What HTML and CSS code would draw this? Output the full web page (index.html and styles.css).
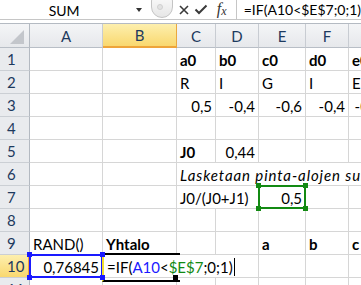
FILE: index.html
```html
<!DOCTYPE html>
<html>
<head>
<meta charset="utf-8">
<link rel="stylesheet" href="styles.css">
</head>
<body>
<div class="fbar">
  <div class="namebox">SUM</div>
  <div class="dd"><span class="tri"></span></div>
  <div class="split"><span class="dot"></span></div>
  <div class="btns">
    <svg class="ic-x" width="10" height="10" viewBox="0 0 10 10"><path d="M1 1L9 9M9 1L1 9" stroke="#3a3a3a" stroke-width="1.6" fill="none"/></svg>
    <svg class="ic-ok" width="14" height="11" viewBox="0 0 14 11"><path d="M1.5 5.5L5 9L12.5 1.5" fill="none" stroke="#3a3a3a" stroke-width="2"/></svg>
    <span class="fx"><span class="f">f</span><span class="x">x</span></span>
  </div>
  <div class="formula">=IF(A10&lt;$E$7;0;1)</div>
</div>
<div class="gap"></div>
<div class="sheet">
  <div class="corner"><span class="tri2"></span></div>
  <div class="ch">A</div><div class="ch sel">B</div><div class="ch">C</div><div class="ch">D</div><div class="ch">E</div><div class="ch">F</div><div class="ch">G</div>

  <div class="rh">1</div><div class="c"></div><div class="c"></div><div class="c b">a0</div><div class="c b">b0</div><div class="c b">c0</div><div class="c b">d0</div><div class="c b">e0</div>

  <div class="rh">2</div><div class="c"></div><div class="c"></div><div class="c">R</div><div class="c">I</div><div class="c">G</div><div class="c">I</div><div class="c">E</div>

  <div class="rh">3</div><div class="c"></div><div class="c"></div><div class="c n">0,5</div><div class="c n">-0,4</div><div class="c n">-0,6</div><div class="c n">-0,4</div><div class="c n">-0,4</div>

  <div class="rh">4</div><div class="c"></div><div class="c"></div><div class="c"></div><div class="c"></div><div class="c"></div><div class="c"></div><div class="c"></div>

  <div class="rh">5</div><div class="c"></div><div class="c"></div><div class="c b">J0</div><div class="c n">0,44</div><div class="c"></div><div class="c"></div><div class="c"></div>

  <div class="rh">6</div><div class="c"></div><div class="c"></div><div class="c i span-rest">Lasketaan pinta-alojen summa</div>

  <div class="rh">7</div><div class="c"></div><div class="c"></div><div class="c span2">J0/(J0+J1)</div><div class="c n ref green">0,5<span class="h tl"></span><span class="h tr"></span><span class="h bl"></span><span class="h br"></span></div><div class="c"></div><div class="c"></div>

  <div class="rh">8</div><div class="c"></div><div class="c"></div><div class="c"></div><div class="c"></div><div class="c"></div><div class="c"></div><div class="c"></div>

  <div class="rh">9</div><div class="c">RAND()</div><div class="c b">Yhtalo</div><div class="c"></div><div class="c"></div><div class="c b">a</div><div class="c b">b</div><div class="c b">c</div>

  <div class="rh sel">10</div><div class="c n ref blue">0,76845<span class="h tl"></span><span class="h tr"></span><span class="h bl"></span><span class="h br"></span></div><div class="c edit span3">=IF(<span class="rb">A10</span>&lt;<span class="rg">$E$7</span>;0;1)<span class="caret"></span></div><div class="c"></div><div class="c"></div><div class="c"></div>

  <div class="rh">11</div><div class="c"></div><div class="c"></div><div class="c"></div><div class="c"></div><div class="c"></div><div class="c"></div><div class="c"></div>
</div>
</body>
</html>
```

FILE: styles.css
```css
* { box-sizing: border-box; margin: 0; padding: 0; }
html, body { width: 361px; height: 285px; overflow: hidden; background: #fff; }
body { font-family: Lato, "Liberation Sans", sans-serif; font-size: 15px; color: #000; }

/* formula bar */
.fbar { display: flex; height: 20px; border-bottom: 1px solid #c6c6c6; overflow: hidden; }
.namebox { width: 132px; display: flex; align-items: center; justify-content: center; font-size: 14px; padding-top: 1px; }
.dd { width: 21px; display: flex; align-items: center; justify-content: center; }
.tri { width: 0; height: 0; border-left: 3.5px solid transparent; border-right: 3.5px solid transparent; border-top: 4px solid #333; }
.split { width: 22px; height: 28px; margin-top: -10px; margin-left: 2px; border: 1px solid #c4c4c4; border-radius: 11px; background: linear-gradient(#ffffff, #e6e6e6); padding: 13px 0 0 5px; flex: none; }
.dot { display: block; width: 6px; height: 6px; border-radius: 50%; background: #e2e2e2; border: 1px solid #d0d0d0; }
.btns { width: 63px; flex: none; display: flex; align-items: center; padding-left: 6px; }
.ic-ok { margin-left: 5px; }
.fx { margin-left: 9px; font-family: "Liberation Serif", serif; font-style: italic; color: #333; font-size: 16px; line-height: 16px; }
.fx .x { font-size: 12px; position: relative; top: 1px; }
.formula { flex: 1; border-left: 1px solid #c6c6c6; padding-left: 7px; font-size: 14px; display: flex; align-items: center; white-space: nowrap; }
.gap { height: 4px; border-bottom: 1px solid #b4bac2; }

/* sheet */
.sheet { display: grid; grid-template-columns: 30px 73px 74px 39px 43px 47px 43px 36px; grid-template-rows: 24px; grid-auto-rows: 23px; }
.corner { background: linear-gradient(#f4f5f7, #e6e8eb); border-right: 1px solid #b3b9c1; border-bottom: 1px solid #b8bec6; display: flex; justify-content: flex-end; align-items: flex-end; padding: 0 5px 3px 0; }
.tri2 { width: 0; height: 0; border-left: 14px solid transparent; border-bottom: 14px solid #c3c6cb; }
.ch { background: linear-gradient(#f4f5f7, #e6e8eb); border-right: 1px solid #c8ccd2; border-bottom: 1px solid #b8bec6; display: flex; align-items: center; justify-content: center; color: #1d3a5e; }
.rh { background: #e9ebee; border-right: 1px solid #b3b9c1; border-bottom: 1px solid #cbcfd4; display: flex; align-items: center; padding-left: 7px; color: #1d3a5e; }
.ch.sel { background: linear-gradient(#fdefae, #f9d86f); border-right-color: #eaa83e; border-bottom: 2px solid #eea43a; }
.rh.sel { background: linear-gradient(#fdefae, #f9d86f); border-right: 2px solid #eea43a; }

.c { border-right: 1px solid #d6d6d6; border-bottom: 1px solid #d6d6d6; display: flex; align-items: flex-end; padding: 0 3px 1px 3px; line-height: 18px; white-space: nowrap; overflow: hidden; }
.n { justify-content: flex-end; }
.b { font-weight: bold; }
.i { font-style: italic; letter-spacing: 0.9px; }
.span-rest { grid-column: 4 / -1; }
.span2 { grid-column: span 2; }
.span3 { grid-column: span 3; }

/* reference boxes */
.ref { position: relative; overflow: visible; }
.ref::after { content: ""; position: absolute; top: -1px; left: -1px; right: -1px; bottom: -1px; border: 2px solid; }
.blue::after { border-color: #1a1aff; }
.green::after { border-color: #138a13; }
.h { position: absolute; width: 5px; height: 5px; z-index: 2; }
.blue .h { background: #1a1aff; }
.green .h { background: #138a13; }
.h.tl { top: -3px; left: -3px; }
.h.tr { top: -3px; right: -3px; }
.h.bl { bottom: -3px; left: -3px; }
.h.br { bottom: -3px; right: -3px; }

/* edit cell */
.edit { position: relative; overflow: visible; padding-left: 4px; }
.edit::before { content: ""; position: absolute; left: -1px; top: -2px; width: 76px; height: 25px; border-top: 2px solid #000; border-bottom: 2px solid #000; border-left: 2px solid #f3df2a; }
.edit::after { content: ""; position: absolute; left: 70px; top: 20px; width: 5px; height: 5px; background: #000; }
.rb { color: #1a1aff; }
.rg { color: #138a13; }
.caret { display: inline-block; width: 1px; height: 18px; background: #000; margin-left: 1px; align-self: flex-end; }
```
